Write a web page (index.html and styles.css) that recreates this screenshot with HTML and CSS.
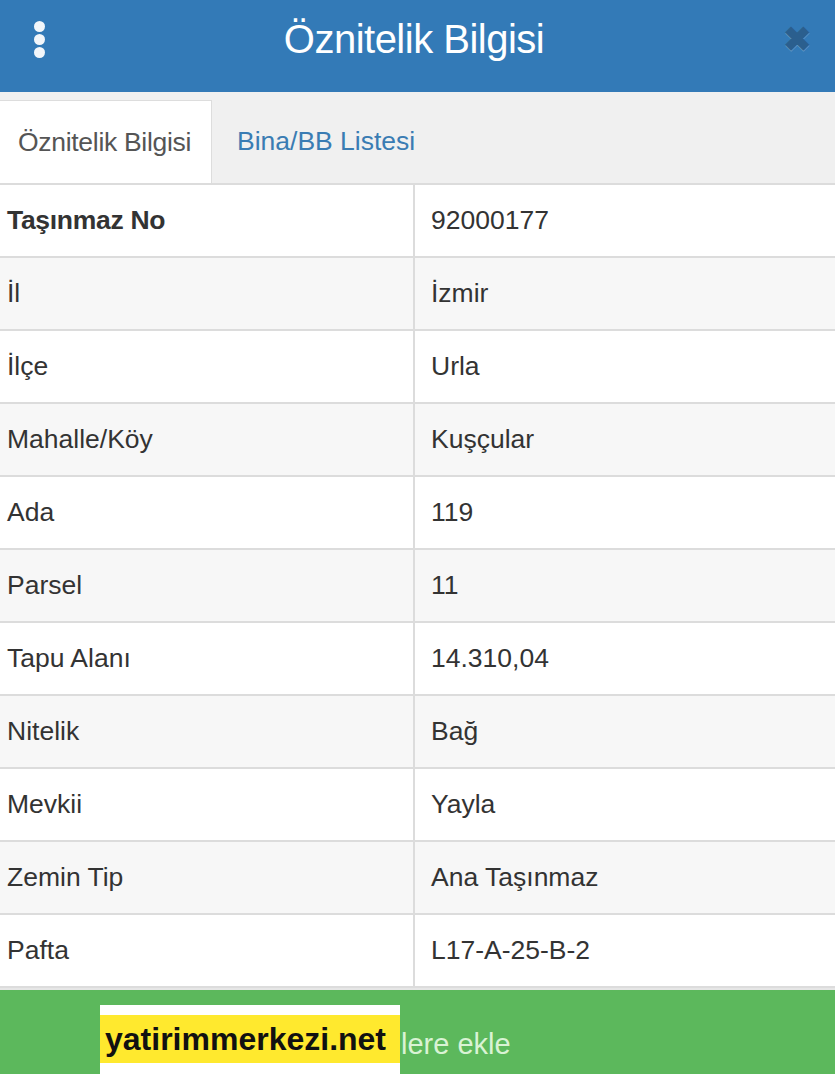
FILE: index.html
```html
<!DOCTYPE html>
<html>
    <head>
    <title>Öznitelik Bilgisi</title>
    <meta charset="UTF-8">
    <meta name="viewport" content="width=device-width, initial-scale=1.0">
    <link rel="stylesheet" href="styles.css">
    </head>

    <body>
        <div class="baslik">
            <div class="menu">
                <span class="nokta"></span>
                <span class="nokta"></span>
                <span class="nokta"></span>
            </div>
            <div class="baslik-yazi">Öznitelik Bilgisi</div>
            <div class="kapat">&#10006;</div>
        </div>

        <div class="sekmeler">
            <div class="sekme aktif">Öznitelik Bilgisi</div>
            <div class="sekme">Bina/BB Listesi</div>
        </div>

        <table class="tablo">
            <tr><td class="kalin">Taşınmaz No</td><td>92000177</td></tr>
            <tr><td>İl</td><td>İzmir</td></tr>
            <tr><td>İlçe</td><td>Urla</td></tr>
            <tr><td>Mahalle/Köy</td><td>Kuşçular</td></tr>
            <tr><td>Ada</td><td>119</td></tr>
            <tr><td>Parsel</td><td>11</td></tr>
            <tr><td>Tapu Alanı</td><td>14.310,04</td></tr>
            <tr><td>Nitelik</td><td>Bağ</td></tr>
            <tr><td>Mevkii</td><td>Yayla</td></tr>
            <tr><td>Zemin Tip</td><td>Ana Taşınmaz</td></tr>
            <tr><td>Pafta</td><td>L17-A-25-B-2</td></tr>
        </table>

        <div class="boton-ekle">Favorilere ekle</div>

        <div class="filigran"><span>yatirimmerkezi.net</span></div>
    </body>
</html>
```

FILE: styles.css
```css
body{
    margin: 0;
    font-family: "Liberation Sans", Arial, sans-serif;
    background-color: white;
    overflow: hidden;
}

.baslik{
    height: 92px;
    background-color: #337ab7;
    display: flex;
    align-items: center;
    justify-content: space-between;
    padding: 0 24px 14px 34px;
    box-sizing: border-box;
}

.menu{
    display: flex;
    flex-direction: column;
    gap: 2px;
}

.nokta{
    width: 11px;
    height: 11px;
    border-radius: 50%;
    background-color: #f2f6fa;
}

.baslik-yazi{
    color: white;
    font-size: 40px;
    letter-spacing: -0.5px;
}

.kapat{
    color: #2b5f8e;
    font-size: 34px;
    font-weight: bold;
    text-shadow: 0 1px 0 rgba(255, 255, 255, 0.25);
}

.sekmeler{
    height: 91px;
    background-color: #f0f0f0;
    display: flex;
    align-items: flex-end;
    padding-top: 8px;
    box-sizing: border-box;
}

.sekme{
    height: 83px;
    display: flex;
    align-items: center;
    padding: 0 18px 0 25px;
    font-size: 26.5px;
    color: #3a7cb3;
}

.sekme.aktif{
    background-color: white;
    color: #555;
    border: 1px solid #ddd;
    border-bottom: none;
    border-left: none;
    width: 212px;
    box-sizing: border-box;
    padding: 0 0 0 18px;
    letter-spacing: -0.3px;
}

.tablo{
    width: 100%;
    border-collapse: collapse;
    border-top: 2px solid #dcdcdc;
}

.tablo td{
    height: 71px;
    padding: 0 7px;
    font-size: 26.5px;
    color: #333;
    border-bottom: 2px solid #dcdcdc;
}

.tablo td:first-child{
    width: 399px;
    border-right: 2px solid #dcdcdc;
}

.tablo td:last-child{
    padding-left: 16px;
}

.tablo tr:nth-child(even) td{
    background-color: #f7f7f7;
}

.kalin{
    font-weight: bold;
    letter-spacing: -0.3px;
}

.boton-ekle{
    height: 110px;
    background-color: #5cb85c;
    border-top: 2px solid #e6e6e6;
    color: #d9f3d4;
    font-size: 29px;
    display: flex;
    justify-content: center;
    padding-top: 38px;
    padding-right: 4px;
    box-sizing: border-box;
}

.filigran{
    position: absolute;
    left: 100px;
    top: 1005px;
    width: 300px;
    height: 80px;
    background-color: white;
    padding-top: 10px;
    box-sizing: border-box;
}

.filigran span{
    display: block;
    background-color: #ffe92e;
    height: 48px;
    line-height: 48px;
    padding-left: 5px;
    font-size: 32px;
    font-weight: bold;
    color: #111;
}
```
